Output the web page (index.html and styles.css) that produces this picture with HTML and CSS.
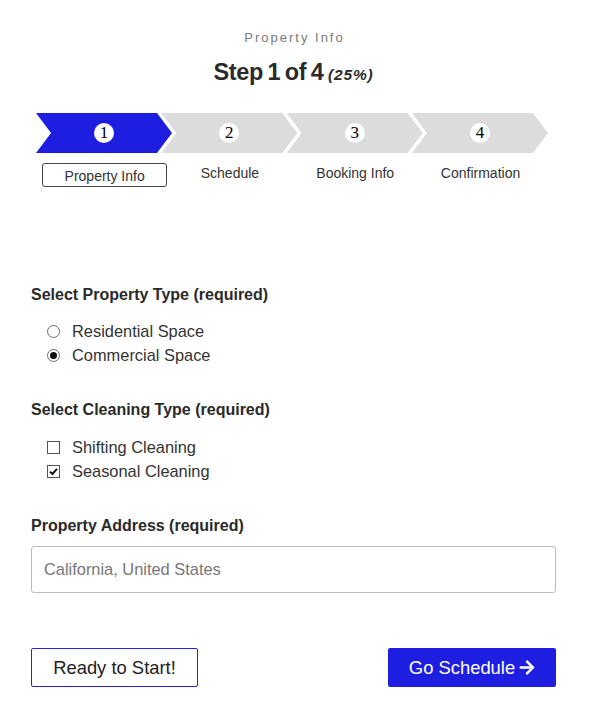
FILE: index.html
```html
<!DOCTYPE html>
<html>
<head>
<meta charset="utf-8">
<link rel="stylesheet" href="styles.css">
</head>
<body>
<div class="page">
  <header class="head">
    <div class="subtitle">Property Info</div>
    <h1 class="title">Step 1 of 4 <span class="pct">(25%)</span></h1>
  </header>

  <div class="steps">
    <div class="chev active"><span class="num">1</span></div>
    <div class="chev"><span class="num">2</span></div>
    <div class="chev"><span class="num">3</span></div>
    <div class="chev"><span class="num">4</span></div>
  </div>
  <div class="labels">
    <div class="label current">Property Info</div>
    <div class="label">Schedule</div>
    <div class="label">Booking Info</div>
    <div class="label">Confirmation</div>
  </div>

  <section class="group first">
    <h2 class="group-title">Select Property Type (required)</h2>
    <div class="opts">
      <div class="opt"><span class="radio"></span>Residential Space</div>
      <div class="opt"><span class="radio on"></span>Commercial Space</div>
    </div>
  </section>

  <section class="group">
    <h2 class="group-title">Select Cleaning Type (required)</h2>
    <div class="opts checks">
      <div class="opt"><span class="check"></span>Shifting Cleaning</div>
      <div class="opt"><span class="check on"><svg viewBox="0 0 13 13" width="13" height="13"><path d="M3 6.6 L5.4 9 L10 3.8" fill="none" stroke="#111" stroke-width="1.9"/></svg></span>Seasonal Cleaning</div>
    </div>
  </section>

  <section class="group">
    <h2 class="group-title">Property Address (required)</h2>
    <div class="input">California, United States</div>
  </section>

  <div class="actions">
    <div class="btn outline">Ready to Start!</div>
    <div class="btn solid">Go Schedule <svg class="arrow" viewBox="0 0 448 512" width="16" height="17"><path fill="#fff" d="M190.5 66.9l22.2-22.2c9.4-9.4 24.6-9.4 33.9 0L441 239c9.4 9.4 9.4 24.6 0 33.9L246.6 467.3c-9.4 9.4-24.6 9.4-33.9 0l-22.2-22.2c-9.5-9.5-9.3-25 .4-34.3L311.4 296H24c-13.3 0-24-10.7-24-24v-32c0-13.3 10.7-24 24-24h287.4L190.9 101.2c-9.8-9.3-10-24.8-.4-34.3z"/></svg></div>
  </div>
</div>
</body>
</html>
```

FILE: styles.css
```css
* { box-sizing: border-box; }
html, body { margin: 0; padding: 0; background: #fff; }
body {
  font-family: "Liberation Sans", Arial, sans-serif;
  color: #2a2a2a;
}
.page {
  width: 596px;
  padding: 28px 40px 0 31px;
}
.head { text-align: center; }
.subtitle {
  font-size: 13px;
  line-height: 20px;
  letter-spacing: 2px;
  color: #7a7a7a;
  padding-left: 2px;
}
.title {
  margin: 9px 0 0;
  font-size: 23.5px;
  line-height: 30px;
  font-weight: 700;
  color: #2a2a2a;
  letter-spacing: -0.4px;
  word-spacing: -1.5px;
}
.pct {
  font-size: 15.5px;
  font-style: italic;
  letter-spacing: 0.8px;
  font-weight: 700;
}
.steps {
  display: flex;
  margin: 23px 0 0 5px;
  height: 40px;
}
.chev {
  flex: 0 0 136px;
  height: 40px;
  background: #dcdcdc;
  clip-path: polygon(0 0, calc(100% - 15px) 0, 100% 50%, calc(100% - 15px) 100%, 0 100%, 15px 50%);
  display: flex;
  align-items: center;
  justify-content: center;
  margin-right: -10.7px;
}
.chev.active { background: #1e1ee0; }
.num {
  width: 20px;
  height: 20px;
  border-radius: 50%;
  background: #fff;
  color: #000;
  font-family: "Liberation Serif", "Times New Roman", serif;
  font-size: 17px;
  line-height: 20px;
  text-align: center;
}
.labels {
  display: flex;
  margin: 10px 0 0 11px;
  align-items: flex-start;
}
.label {
  flex: 0 0 125.3px;
  text-align: center;
  font-size: 14px;
  line-height: 20px;
  color: #333;
}
.label.current {
  border: 1px solid #444;
  border-radius: 3px;
  padding-top: 2px;
}
.group { margin-top: 32px; }
.group.first { margin-top: 97px; }
.group-title {
  margin: 0;
  font-size: 16px;
  line-height: 22px;
  font-weight: 700;
  color: #2a2a2a;
}
.opts {
  margin-top: 13px;
  padding-left: 16px;
}
.opts.checks { margin-top: 14px; }
.opt {
  display: flex;
  align-items: center;
  height: 24px;
  font-size: 16.4px;
  color: #333;
}
.radio, .check {
  width: 13px;
  height: 13px;
  margin-right: 12px;
  flex: none;
  display: flex;
  align-items: center;
  justify-content: center;
}
.radio {
  border: 1px solid #6a6a6a;
  border-radius: 50%;
  background: #fff;
}
.radio.on::after {
  content: "";
  width: 7px;
  height: 7px;
  border-radius: 50%;
  background: #111;
}
.check {
  border: 1px solid #555;
  background: #fff;
}
.check svg { flex: none; margin: -1px; }
.group .input { margin-top: 9px; }
.input {
  height: 47px;
  border: 1px solid #bcbcbc;
  border-radius: 3px;
  padding-left: 12px;
  display: flex;
  align-items: center;
  font-size: 16.4px;
  color: #777;
}
.actions {
  display: flex;
  justify-content: space-between;
  margin-top: 55px;
}
.btn {
  height: 39px;
  border-radius: 2px;
  display: flex;
  align-items: center;
  justify-content: center;
  font-size: 18.4px;
}
.btn.outline {
  width: 167px;
  border: 1px solid #2323e0;
  color: #222;
}
.btn.solid {
  width: 168px;
  background: #1e1ee0;
  color: #fff;
  gap: 4px;
}
.arrow { display: block; }
```
